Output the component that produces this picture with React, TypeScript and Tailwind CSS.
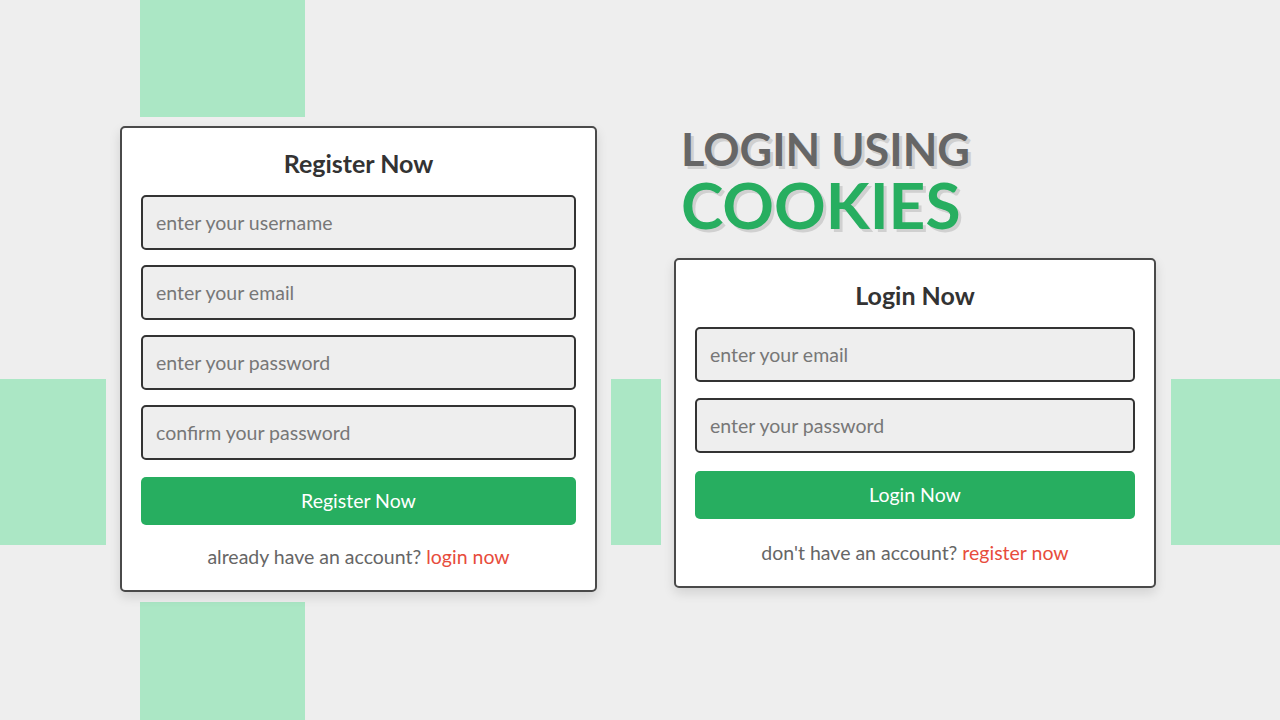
const font = "font-['Lato','Open_Sans',sans-serif]";

const Field = ({ placeholder, type = "text" }: { placeholder: string; type?: string }) => (
  <input
    type={type}
    placeholder={placeholder}
    className="h-[55px] w-full rounded-[5px] border-2 border-[#333] bg-[#eee] px-[13px] text-[19.5px] text-[#333] placeholder:text-[#777] outline-none"
  />
);

const Card = ({
  title,
  fields,
  button,
  question,
  link,
  className,
  loose,
}: {
  title: string;
  fields: { placeholder: string; type?: string }[];
  button: string;
  question: string;
  link: string;
  className?: string;
  loose?: boolean;
}) => (
  <form
    className={`flex flex-col rounded-[5px] border-2 border-[#4a4a4a] bg-white px-[19px] pt-[18px] pb-[20px] shadow-[0_5px_12px_rgba(0,0,0,0.12)] ${className ?? ""}`}
  >
    <h3 className="mb-[15px] text-center text-[25px] leading-[34px] font-bold text-[#333]">{title}</h3>
    <div className={`flex flex-col ${loose ? "gap-[16px]" : "gap-[15px]"}`}>
      {fields.map((f) => (
        <Field key={f.placeholder} {...f} />
      ))}
    </div>
    <button
      type="button"
      className={`${loose ? "mt-[18px]" : "mt-[17px]"} h-[48px] w-full rounded-[5px] bg-[#27ae60] text-[19.5px] text-white`}
    >
      {button}
    </button>
    <p className={`${loose ? "mt-[21px]" : "mt-[19px]"} text-center text-[19.5px] leading-[26px] text-[#666]`}>
      {question} <a className="text-[#e74c3c]">{link}</a>
    </p>
  </form>
);

export default function App() {
  return (
    <div className={`relative h-[720px] w-[1280px] overflow-hidden bg-[#eee] ${font}`}>
      {/* decorative squares */}
      <div className="absolute left-[140px] top-0 h-[117px] w-[165px] bg-[#abe7c5]" />
      <div className="absolute left-[140px] top-[602px] h-[118px] w-[165px] bg-[#abe7c5]" />
      <div className="absolute left-0 top-[379px] h-[166px] w-[106px] bg-[#abe7c5]" />
      <div className="absolute left-[611px] top-[379px] h-[166px] w-[50px] bg-[#abe7c5]" />
      <div className="absolute left-[1171px] top-[379px] h-[166px] w-[109px] bg-[#abe7c5]" />

      <div className="relative flex h-full items-center gap-[77px] pl-[120px]">
        <Card
          className="mb-[3px] w-[477px]"
          title="Register Now"
          fields={[
            { placeholder: "enter your username" },
            { placeholder: "enter your email", type: "email" },
            { placeholder: "enter your password", type: "password" },
            { placeholder: "confirm your password", type: "password" },
          ]}
          button="Register Now"
          question="already have an account?"
          link="login now"
        />
        <div className="mb-[10px] flex flex-col">
          <h1 className="pl-[7px] uppercase font-bold">
            <span className="block text-[45px] leading-[54px] text-[#666] [text-shadow:3px_3px_0_#d0d0d0]">
              login using
            </span>
            <span className="-mt-[10px] block text-[64px] leading-[77px] text-[#27ae60] [text-shadow:3px_3px_0_#d0d0d0]">
              cookies
            </span>
          </h1>
          <Card
            className="mt-[15px] w-[482px]"
            loose
            title="Login Now"
            fields={[
              { placeholder: "enter your email", type: "email" },
              { placeholder: "enter your password", type: "password" },
            ]}
            button="Login Now"
            question="don't have an account?"
            link="register now"
          />
        </div>
      </div>
    </div>
  );
}
